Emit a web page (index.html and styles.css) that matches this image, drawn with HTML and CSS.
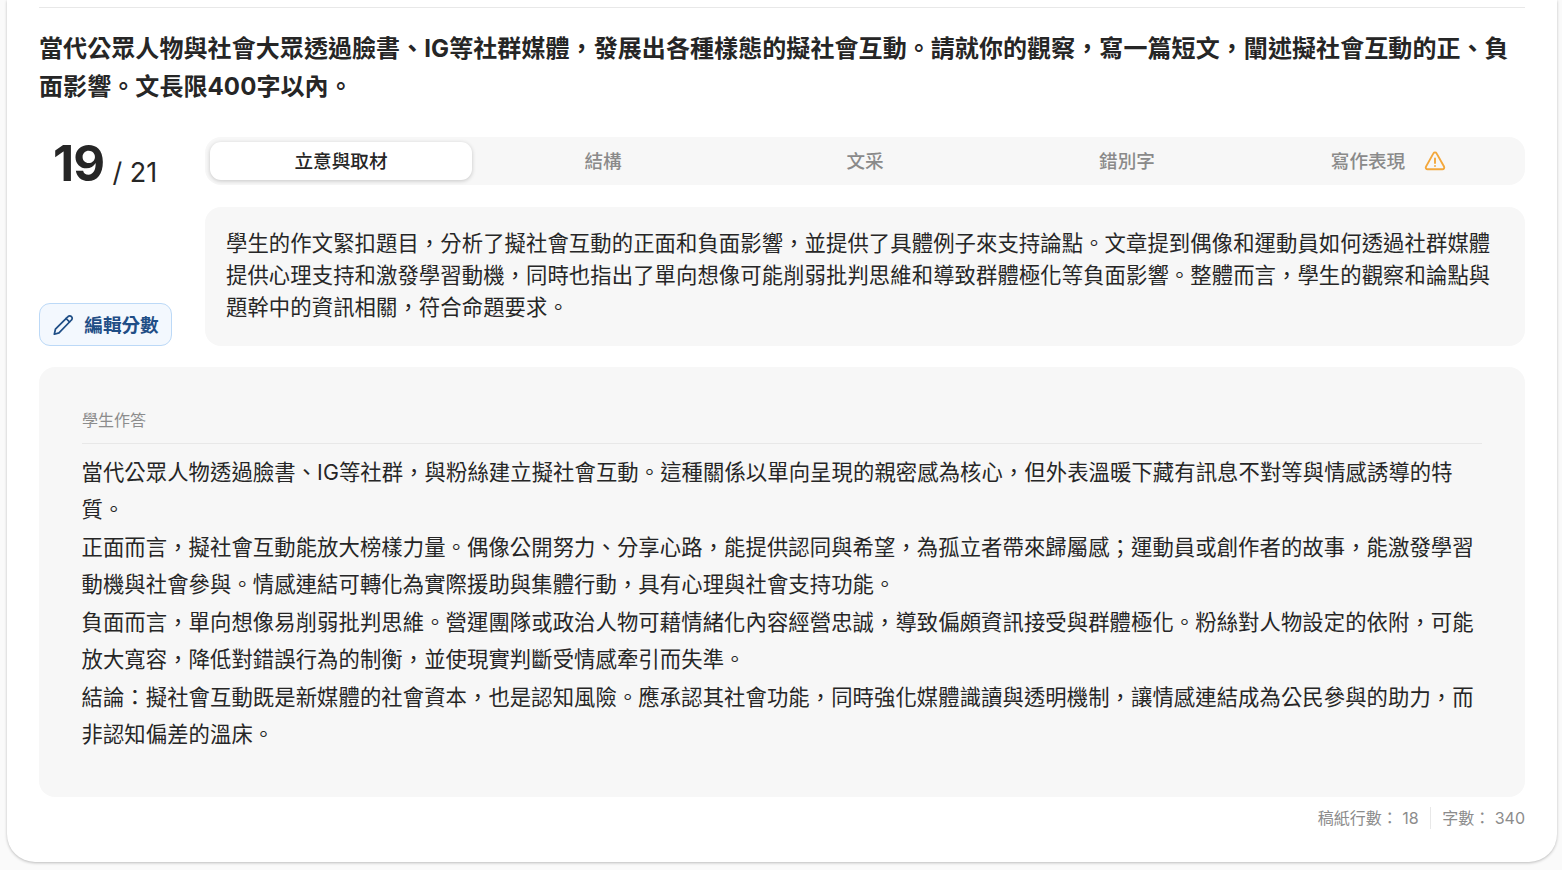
FILE: index.html
```html
<!doctype html>
<html>
  <head>
    <meta charset=utf-8>
    <title>作文批改</title>
    <link rel="stylesheet" href="styles.css">
  </head>
  <body>
    <div class="card">
      <div class="question">
        當代公眾人物與社會大眾透過臉書、IG等社群媒體，發展出各種樣態的擬社會互動。請就你的觀察，寫一篇短文，闡述擬社會互動的正、負<br>面影響。文長限400字以內。
      </div>

      <div class="review">
        <div class="side">
          <div class="score"><b>19</b> <span>/ 21</span></div>
          <button class="edit-btn">
            <svg width="26" height="26" viewBox="0 0 24 24" fill="none" stroke="#1f4e86" stroke-width="1.6" stroke-linecap="round" stroke-linejoin="round">
              <path d="M4 20.5l1-4.6L16.6 4.2a2.2 2.2 0 0 1 3.2 0a2.2 2.2 0 0 1 0 3.2L8.3 19.2z"/>
              <path d="M14.8 6l3.2 3.2"/>
            </svg>
            <span class="btn-label">編輯分數</span>
          </button>
        </div>
        <div class="main">
          <div class="tabs">
            <div class="tab active"><span>立意與取材</span></div>
            <div class="tab"><span>結構</span></div>
            <div class="tab"><span>文采</span></div>
            <div class="tab"><span>錯別字</span></div>
            <div class="tab"><span>寫作表現</span>
              <svg class="warn" width="24" height="24" viewBox="0 0 24 24" fill="none" stroke="#f3a73b" stroke-width="1.9" stroke-linecap="round" stroke-linejoin="round">
                <path d="M10.4 4.4L3 17.6a1.8 1.8 0 0 0 1.6 2.7h14.8a1.8 1.8 0 0 0 1.6-2.7L13.6 4.4a1.8 1.8 0 0 0-3.2 0z"/>
                <path d="M12 9.5v4.5"/>
                <path d="M12 17h.01"/>
              </svg>
            </div>
          </div>
          <div class="comment">
            學生的作文緊扣題目，分析了擬社會互動的正面和負面影響，並提供了具體例子來支持論點。文章提到偶像和運動員如何透過社群媒體<br>提供心理支持和激發學習動機，同時也指出了單向想像可能削弱批判思維和導致群體極化等負面影響。整體而言，學生的觀察和論點與<br>題幹中的資訊相關，符合命題要求。
          </div>
        </div>
      </div>

      <div class="answer">
        <div class="answer-title">學生作答</div>
        <div class="answer-text">
          當代公眾人物透過臉書、IG等社群，與粉絲建立擬社會互動。這種關係以單向呈現的親密感為核心，但外表溫暖下藏有訊息不對等與情感誘導的特<br>質。<br>
          正面而言，擬社會互動能放大榜樣力量。偶像公開努力、分享心路，能提供認同與希望，為孤立者帶來歸屬感；運動員或創作者的故事，能激發學習<br>動機與社會參與。情感連結可轉化為實際援助與集體行動，具有心理與社會支持功能。<br>
          負面而言，單向想像易削弱批判思維。營運團隊或政治人物可藉情緒化內容經營忠誠，導致偏頗資訊接受與群體極化。粉絲對人物設定的依附，可能<br>放大寬容，降低對錯誤行為的制衡，並使現實判斷受情感牽引而失準。<br>
          結論：擬社會互動既是新媒體的社會資本，也是認知風險。應承認其社會功能，同時強化媒體識讀與透明機制，讓情感連結成為公民參與的助力，而<br>非認知偏差的溫床。
        </div>
      </div>

      <div class="counts">
        <span>稿紙行數： 18</span>
        <i></i>
        <span>字數： 340</span>
      </div>
    </div>
  </body>
</html>
```

FILE: styles.css
```css
*{
  box-sizing:border-box;
}
html,body{
  height:100%;
}
body{
  margin:0;
  overflow:hidden;
  background:#fafafa;
  color:#262626;
  font-family:Inter,"Noto Sans CJK TC",sans-serif;
}
.card{
  height:862px;
  margin:0 5px 0 7px;
  padding:7px 32px 0;
  background:#fff;
  border-radius:0 0 28px 28px;
  box-shadow:0 1px 3px rgba(0,0,0,.25);
}
.question{
  border-top:1.5px solid #e8e8e8;
  padding-top:22px;
  font-size:24px;
  line-height:38px;
  font-weight:700;
  letter-spacing:.08px;
  white-space:nowrap;
}
.review{
  display:flex;
  gap:33px;
  margin-top:31px;
}
.side{
  width:133px;
  flex:none;
  display:flex;
  flex-direction:column;
  justify-content:space-between;
}
.score{
  padding:1px 0 0 14px;
  line-height:52px;
  white-space:nowrap;
}
.score b{
  font-size:49px;
  font-weight:700;
  letter-spacing:-1px;
}
.score span{
  font-size:27px;
  margin-left:4px;
  position:relative;
  top:1px;
}
.edit-btn{
  height:43px;
  display:flex;
  align-items:center;
  justify-content:center;
  gap:8px;
  padding:0 2px 0 0;
  background:#f3f8fe;
  border:1.5px solid #bcd9f7;
  border-radius:11px;
  color:#1f4e86;
  font-family:inherit;
  font-size:18.6px;
  font-weight:700;
}
.btn-label{
  padding-bottom:3px;
}
.main{
  flex:1;
  min-width:0;
}
.tabs{
  display:flex;
  height:48px;
  padding:5px;
  background:#f7f7f7;
  border-radius:16px;
}
.tab{
  flex:1;
  display:flex;
  align-items:center;
  justify-content:center;
  border-radius:11px;
  color:#8a8a8a;
  font-size:18.6px;
  font-weight:500;
}
.tab span{
  padding-bottom:4px;
}
.tab.active{
  background:#fff;
  color:#262626;
  box-shadow:0 1px 4px rgba(0,0,0,.2);
}
.warn{
  margin-left:18px;
}
.comment{
  margin-top:22px;
  padding:20px 20px 0 21px;
  height:139px;
  background:#f7f7f7;
  border-radius:16px;
  font-size:21.33px;
  line-height:32px;
  letter-spacing:.1px;
  white-space:nowrap;
}
.answer{
  margin-top:21px;
  height:430px;
  padding:40px 43px 0;
  background:#f7f7f7;
  border-radius:16px;
}
.answer-title{
  padding-bottom:10px;
  border-bottom:1.5px solid #e8e8e8;
  color:#8c8c8c;
  font-size:16px;
  line-height:26px;
}
.answer-text{
  margin-top:10px;
  margin-left:-.5px;
  font-size:21.33px;
  line-height:37.45px;
  letter-spacing:.09px;
  white-space:nowrap;
}
.counts{
  display:flex;
  justify-content:flex-end;
  align-items:center;
  gap:11px;
  margin-top:10px;
  color:#8c8c8c;
  font-size:16px;
  line-height:22px;
}
.counts i{
  width:1.5px;
  height:22px;
  background:#e8e8e8;
}
```
